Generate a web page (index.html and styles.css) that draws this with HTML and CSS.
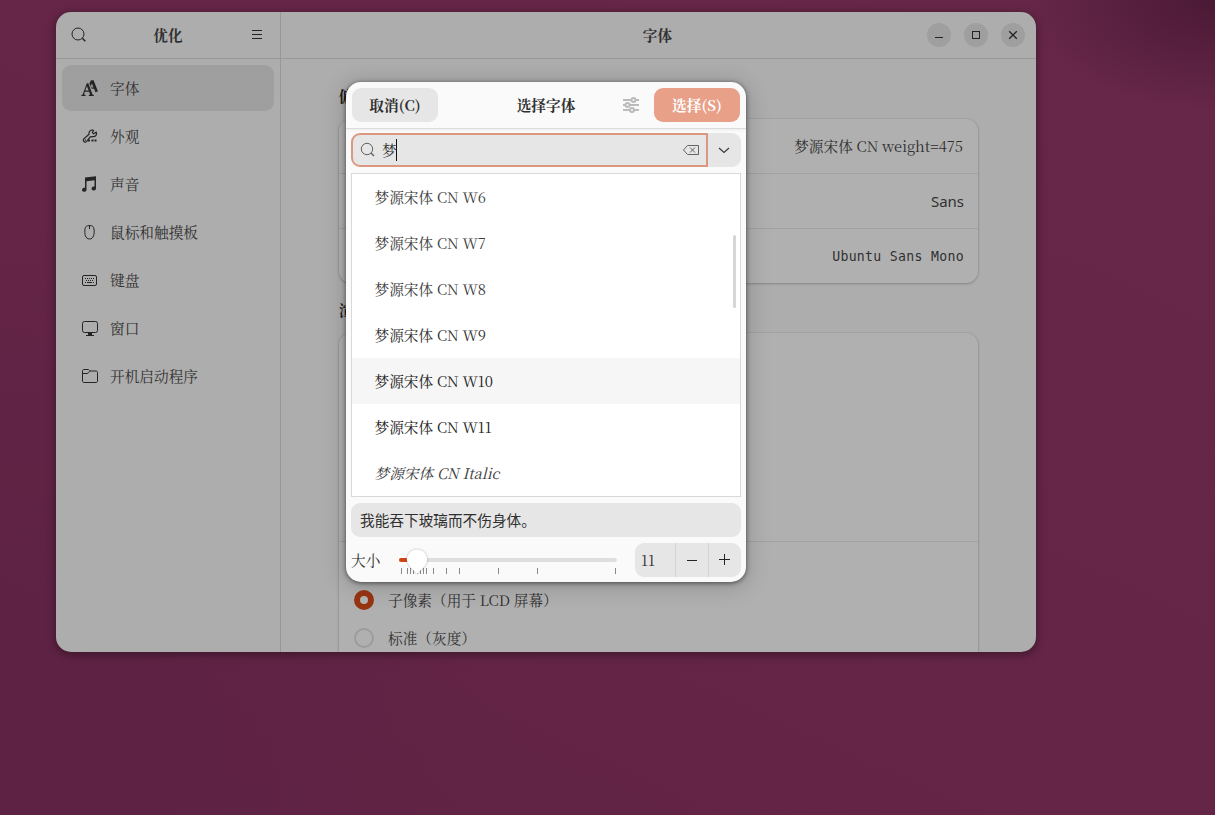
FILE: index.html
```html
<!DOCTYPE html>
<html lang="zh-CN">
<head>
  <meta charset="utf-8">
  <title>优化</title>
  <link rel="stylesheet" href="styles.css">
</head>
<body>
  <div class="window">
    <aside class="sidebar">
      <header class="sidebar-header">
        <svg class="icon" width="16" height="16" viewBox="0 0 16 16"><circle cx="7" cy="7" r="6"/><path d="M11.3 11.3l3 3" stroke-width="1.400"/></svg>
        <h1>优化</h1>
        <svg class="icon" width="16" height="16" viewBox="0 0 16 16"><path d="M3 3.500h10M3 7.500h10M3 11.500h10"/></svg>
      </header>
      <nav class="menu">
        <a class="menu-item active">
          <svg class="icon solid" width="18" height="18" viewBox="0 0 18 18"><path fill-rule="evenodd" d="M5.800 4.300h1.500l4.200 11.200 1.300.5v1H7.800v-1l1.300-.4-1-2.900H3.900l-.9 2.800 1.600.5v1H.4v-1l1.300-.6zM5.900 7.200L4.300 11.600h3.400z"/><path fill-rule="evenodd" d="M8.300 4.500L10 1.200h2.600l4.300 11-2.400 1-1.400-3.400h-2.300zM10.900 4.500l-1 2.300.8 1.600h1.700z"/></svg>
          <span>字体</span>
        </a>
        <a class="menu-item">
          <svg class="icon" width="18" height="18" viewBox="0 0 18 18"><path d="M8 7.300c-.5-2.400 1.300-4.500 3.700-4.300l.8.500-1.200 2 1.300 1.300L15.200 5.200c1.200 2.200-.7 4.700-3.200 4.500L9.200 9.800l-3.500 4.600c-1.600 1.700-4.300-.2-3.100-2.300z" stroke-width="1.200"/><path d="M3.800 13h1" stroke-width="1.500"/><path d="M7 13.500h2M10.500 13.500h2M13.500 13.500h2" stroke-width="2"/></svg>
          <span>外观</span>
        </a>
        <a class="menu-item">
          <svg class="icon solid" width="18" height="18" viewBox="0 0 18 18"><path d="M4 2.600l11-1.400v12.300a2.200 2 0 1 1-1.500-1.900V5.300L5.500 6.200v8.500a2.200 2 0 1 1-1.500-1.900z"/></svg>
          <span>声音</span>
        </a>
        <a class="menu-item">
          <svg class="icon" width="18" height="18" viewBox="0 0 18 18"><path d="M8.500 2.500c3 0 4.200 1.200 4.500 3.500.7 5-.4 10-4.500 10S3.300 11 4 6c.3-2.300 1.500-3.500 4.500-3.500zM8.500 2.500V6"/></svg>
          <span>鼠标和触摸板</span>
        </a>
        <a class="menu-item">
          <svg class="icon" width="18" height="18" viewBox="0 0 18 18"><rect x="1.500" y="4.500" width="14" height="10" rx="1.500"/><path d="M4 7.500h9M5 9.500h8" stroke-dasharray="1 1"/><path d="M4 11.500h1M6 11.500h5M12 11.500h1"/></svg>
          <span>键盘</span>
        </a>
        <a class="menu-item">
          <svg class="icon" width="18" height="18" viewBox="0 0 18 18"><rect x="1.500" y="2.500" width="15" height="11" rx="2"/><path d="M7 15h4" stroke-width="2"/><path d="M5 16.500h8"/></svg>
          <span>窗口</span>
        </a>
        <a class="menu-item">
          <svg class="icon" width="18" height="18" viewBox="0 0 18 18"><path d="M1.500 6V4c0-1 .5-1.500 1.500-1.500h4c1 0 1.500 1.500 2.500 1.500H15c1 0 1.500.5 1.500 1.500v8.500c0 1-.5 1.500-1.500 1.500H3c-1 0-1.500-.5-1.500-1.500zM1.500 6.500H6c1.500 0 2-2 3.500-2.500"/></svg>
          <span>开机启动程序</span>
        </a>
      </nav>
    </aside>

    <main class="content">
      <header class="content-header">
        <h1>字体</h1>
        <div class="window-buttons">
          <button><svg class="icon" width="16" height="16" viewBox="0 0 16 16"><path d="M4 10.500h8"/></svg></button>
          <button><svg class="icon" width="16" height="16" viewBox="0 0 16 16"><rect x="4.500" y="4.500" width="7" height="7"/></svg></button>
          <button><svg class="icon" width="16" height="16" viewBox="0 0 16 16"><path d="M4.200 4.200l7.600 7.600M11.800 4.200l-7.600 7.600" stroke-width="1.300"/></svg></button>
        </div>
      </header>
      <div class="page">
        <h2>偏好</h2>
        <div class="card">
          <div class="font-row">梦源宋体 CN weight=475</div>
          <div class="font-row sans">Sans</div>
          <div class="font-row mono">Ubuntu Sans Mono</div>
        </div>
        <h2>渲染</h2>
        <div class="card rendering">
          <div class="preview"></div>
          <div class="radios">
            <label class="radio-row"><i class="radio checked"></i><span>子像素（用于 LCD 屏幕）</span></label>
            <label class="radio-row"><i class="radio"></i><span>标准（灰度）</span></label>
          </div>
        </div>
      </div>
    </main>
  </div>

  <div class="dialog">
    <header class="dialog-header">
      <button class="btn">取消(C)</button>
      <h1>选择字体</h1>
      <svg class="icon filter" width="18" height="18" viewBox="0 0 18 18"><path d="M1 4h8M14 4h3M1 9h2M8 9h9M1 14h6M12 14h5"/><circle cx="11.500" cy="4" r="2"/><circle cx="5.500" cy="9" r="2"/><circle cx="10" cy="14" r="2"/></svg>
      <button class="btn suggested">选择(S)</button>
    </header>
    <div class="dialog-body">
      <div class="search">
        <div class="search-entry">
          <svg class="icon" width="16" height="16" viewBox="0 0 16 16"><circle cx="7" cy="7" r="5.700"/><path d="M11 11l3 3" stroke-width="1.400"/></svg>
          <span class="query">梦</span>
          <svg class="icon" width="18" height="16" viewBox="0 0 18 16"><path d="M1.500 8l4-4.500h11v9h-11zM8 5.500l5 5M13 5.500l-5 5"/></svg>
        </div>
        <button class="search-more"><svg class="icon" width="16" height="16" viewBox="0 0 16 16"><path d="M3 6l5 4.500L13 6" stroke-width="1.200"/></svg></button>
      </div>
      <ul class="font-list">
        <li class="w6">梦源宋体 CN W6</li>
        <li class="w7">梦源宋体 CN W7</li>
        <li class="w8">梦源宋体 CN W8</li>
        <li class="w9">梦源宋体 CN W9</li>
        <li class="w10 hover">梦源宋体 CN W10</li>
        <li class="w11">梦源宋体 CN W11</li>
        <li class="italic">梦源宋体 CN Italic</li>
      </ul>
      <div class="sample">我能吞下玻璃而不伤身体。</div>
      <div class="size-row">
        <span class="size-label">大小</span>
        <svg class="scale" width="220" height="34" viewBox="0 0 220 34">
          <rect x="1" y="15" width="218" height="4" rx="2" fill="#dedede"/>
          <path d="M3 15h16v4H3a2 2 0 0 1 0-4z" fill="#d04414"/>
          <path class="ticks" d="M3.500 25v6M9.500 25v6M12.500 25v6M15.500 25v6M19.500 25v6M22.500 25v6M25.500 25v6M28.500 25v6M35.500 25v6M48.500 25v6M61.500 25v6M100.500 25v6M139.500 25v6M217.500 25v6"/>
          <path class="knob" d="M19 6.500a10 10 0 0 1 7.100 17.100L19 31l-7.100-7.400A10 10 0 0 1 19 6.500z"/>
        </svg>
        <div class="spin">
          <span class="spin-value">11</span>
          <button><svg class="icon" width="16" height="16" viewBox="0 0 16 16"><path d="M3 8.500h10"/></svg></button>
          <button><svg class="icon" width="16" height="16" viewBox="0 0 16 16"><path d="M2 7.500h11M7.500 2v11"/></svg></button>
        </div>
      </div>
    </div>
  </div>
</body>
</html>
```
FILE: styles.css
```css
* {
  box-sizing: border-box;
}
body {
  margin: 0;
  width: 1215px;
  height: 815px;
  overflow: hidden;
  background:
    radial-gradient(ellipse 190px 110px at 100% 0, #4a1935 0%, rgba(80, 28, 60, 0) 100%),
    radial-gradient(ellipse 500px 600px at 0 100%, #5d2244 0%, rgba(94, 34, 68, 0) 100%),
    linear-gradient(25deg, #602344 0%, #652547 50%, #672748 100%);
  font-family: "Noto Serif CJK SC", "Liberation Serif", serif;
  font-size: 14.67px;
  color: #303030;
}
h1, h2 {
  margin: 0;
  font-size: 14.67px;
  font-weight: 700;
}
h1 {
  padding-bottom: 1px;
}
button {
  border: none;
  padding: 0;
  font: inherit;
  color: inherit;
  display: flex;
  align-items: center;
  justify-content: center;
}
.icon {
  flex: none;
  fill: none;
  stroke: #242424;
  stroke-width: 1;
}
.icon.solid {
  fill: #242424;
  stroke: none;
}

/* main window */
.window {
  width: 980px;
  height: 640px;
  margin: 12px 0 0 56px;
  display: flex;
  background: #adadad;
  border-radius: 15px;
  overflow: hidden;
  box-shadow: 0 2px 9px 1px rgba(0, 0, 0, .35);
}
.sidebar {
  width: 225px;
  border-right: 1px solid #989898;
}
.sidebar-header {
  height: 47px;
  padding: 0 15px;
  display: flex;
  align-items: center;
  justify-content: space-between;
  border-bottom: 1px solid #989898;
}
.menu {
  padding: 6px;
  display: flex;
  flex-direction: column;
  gap: 2px;
}
.menu-item {
  height: 46px;
  padding-left: 19px;
  display: flex;
  align-items: center;
  gap: 11px;
  border-radius: 9px;
}
.menu-item span,
.radio-row span {
  padding-bottom: 2px;
}
.menu-item.active {
  background: #9f9f9f;
}
.content {
  flex: 1;
  display: flex;
  flex-direction: column;
}
.content-header {
  flex: none;
  height: 47px;
  padding: 0 11px 0 84px;
  display: flex;
  align-items: center;
  border-bottom: 1px solid #989898;
}
.content-header h1 {
  flex: 1;
  text-align: center;
  padding-left: 23px;
}
.window-buttons {
  display: flex;
  gap: 13px;
}
.window-buttons button {
  width: 24px;
  height: 24px;
  border-radius: 50%;
  background: #9f9f9f;
}
.page {
  padding: 25px 58px 0;
}
.page h2 {
  height: 24px;
  line-height: 24px;
  color: #1c1c1c;
}
.card {
  margin: 11px 0 15px;
  background: #b0b0b0;
  border-radius: 12px;
  box-shadow: 0 0 0 1px rgba(0, 0, 0, .04), 0 1px 3px rgba(0, 0, 0, .2);
}
.font-row {
  height: 55px;
  padding: 0 15px 1px 0;
  display: flex;
  align-items: center;
  justify-content: flex-end;
  border-bottom: 1px solid #a1a1a1;
}
.font-row:last-child {
  height: 54px;
  border-bottom: none;
}
.font-row.sans {
  padding: 0 14px 0 0;
  font-family: "Noto Sans", sans-serif;
  font-size: 15px;
}
.font-row.mono {
  padding: 0 14px 0 0;
  font-family: "DejaVu Sans Mono", monospace;
  font-size: 13.2px;
  letter-spacing: .3px;
}
.rendering {
  height: 340px;
}
.preview {
  height: 209px;
  border-bottom: 1px solid #a1a1a1;
}
.radios {
  padding: 39px 0 0 15px;
}
.radio-row {
  height: 38px;
  display: flex;
  align-items: center;
}
.radio {
  width: 20px;
  height: 20px;
  margin-right: 14px;
  border: 2px solid #9c9c9c;
  border-radius: 50%;
}
.radio.checked {
  border: 6px solid #983412;
  background: #b4b4b4;
}

/* font chooser */
.dialog {
  position: absolute;
  left: 346px;
  top: 82px;
  width: 400px;
  height: 500px;
  background: #fafafa;
  border-radius: 15px;
  overflow: hidden;
  box-shadow: 0 1px 5px rgba(0, 0, 0, .55), 0 3px 22px 3px rgba(0, 0, 0, .16);
}
.dialog-header {
  height: 47px;
  padding: 0 6px;
  display: flex;
  align-items: center;
  border-bottom: 1px solid #dcdcdc;
  box-shadow: 0 1px 2px rgba(0, 0, 0, .06);
}
.dialog-header h1 {
  flex: 1;
  text-align: center;
  padding-left: 32px;
}
.btn {
  width: 86px;
  height: 34px;
  padding-bottom: 2px;
  border-radius: 9px;
  background: #e6e6e6;
  font-weight: 700;
}
.btn.suggested {
  background: #e8a088;
  color: #fff;
}
.filter {
  margin-right: 14px;
  stroke: #bbb;
  stroke-width: 2;
}
.dialog-body {
  padding: 4px 5px 0;
}
.search {
  height: 34px;
  display: flex;
}
.search-entry {
  flex: 1;
  padding: 0 6px 0 7px;
  display: flex;
  align-items: center;
  background: #e6e6e6;
  border: 2px solid #dc9780;
  border-radius: 9px 0 0 9px;
}
.search-entry .icon {
  stroke: #626262;
}
.query {
  width: 15px;
  height: 22px;
  line-height: 21px;
  margin: 0 auto 0 6px;
  border-right: 1px solid #111;
}
.search-more {
  width: 33px;
  padding-right: 1px;
  background: #e6e6e6;
  border-radius: 0 9px 9px 0;
}
.search-more .icon {
  stroke: #3c3c3c;
}
.font-list {
  position: relative;
  height: 324px;
  margin: 6px 0;
  padding: 0;
  list-style: none;
  background: #fff;
  border: 1px solid #d9d9d9;
  color: #3c3c3c;
}
.font-list::after {
  content: "";
  position: absolute;
  right: 4px;
  top: 61px;
  width: 3px;
  height: 73px;
  border-radius: 2px;
  background: #d6d6d6;
}
.font-list li {
  height: 46px;
  padding: 0 0 2px 22.5px;
  display: flex;
  align-items: center;
}
.font-list .hover {
  background: #f6f6f6;
}
.font-list .w9 {
  color: #303030;
}
.font-list .w10,
.font-list .w11 {
  color: #222;
}
.italic {
  font-style: italic;
}
.sample {
  height: 34px;
  line-height: 34px;
  padding-left: 9px;
  background: #e6e6e6;
  border-radius: 9px;
  font-family: "Noto Sans CJK SC", sans-serif;
}
.size-row {
  height: 34px;
  margin-top: 6px;
  display: flex;
  align-items: center;
}
.size-label {
  width: 47px;
  padding-bottom: 2px;
}
.ticks {
  stroke: #888;
}
.knob {
  fill: #fff;
  filter: drop-shadow(0 0 1px rgba(0, 0, 0, .3));
}
.spin {
  width: 106px;
  height: 34px;
  margin-left: auto;
  display: flex;
  background: #e6e6e6;
  border-radius: 9px;
}
.spin-value {
  flex: 1;
  padding-left: 6px;
  line-height: 33px;
}
.spin button {
  width: 33px;
  background: none;
  border-left: 1px solid #d3d3d3;
}
```
